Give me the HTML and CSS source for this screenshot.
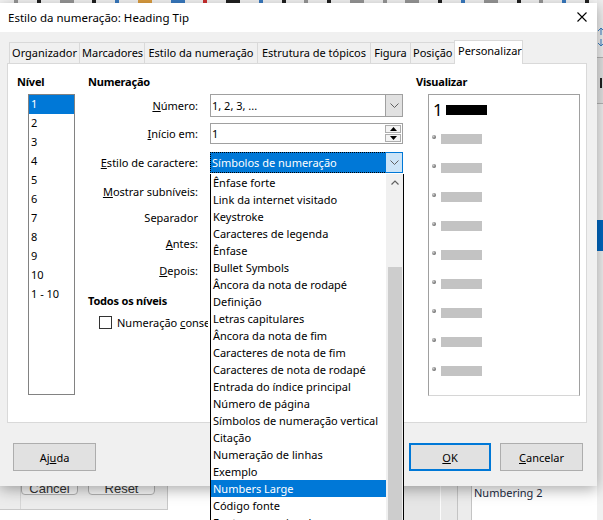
FILE: index.html
```html
<!DOCTYPE html>
<html lang="pt">
<head>
<meta charset="utf-8">
<title>Estilo da numeração: Heading Tip</title>
<link rel="stylesheet" href="styles.css">
</head>
<body>
<div class="screen">

  <div class="bg-toolbar">
    <i class="mk g"></i><i class="mk d"></i><i class="mk g wide"></i><i class="mk d"></i><i class="mk b"></i>
    <i class="mk o wide"></i><i class="mk b wide"></i><i class="mk r"></i><i class="mk d wide"></i><i class="mk b"></i>
    <i class="mk d"></i><i class="mk g"></i><i class="mk d"></i><i class="mk g wide"></i><i class="mk g"></i>
    <i class="mk g wide"></i><i class="mk d"></i><i class="mk b"></i><i class="mk g wide"></i><i class="mk d"></i>
    <i class="mk g"></i><i class="mk b"></i><i class="mk d"></i>
  </div>

  <div class="bg-side">
    <svg class="side-arrows" width="6" height="22" viewBox="0 0 6 22">
      <path d="M1 5 L4 2 L7 5 M4 2 V9 M1 17 L4 20 L7 17 M4 13 V20" fill="none" stroke="#3b7fc4" stroke-width="1"/>
    </svg>
    <div class="side-box"></div>
    <div class="side-blue"></div>
  </div>

  <div class="bg-bottom">
    <div class="bg-left">
      <div class="bg-btnbar">
        <span class="bg-btn cancel">Cancel</span>
        <span class="bg-btn reset">Reset</span>
      </div>
    </div>
    <div class="bg-white"></div>
    <div class="bg-col c1"></div>
    <div class="bg-col c2"></div>
    <div class="bg-col c3"></div>
    <div class="bg-col c4">Numbering 2</div>
  </div>

  <div class="dialog">
    <div class="titlebar">
      <span class="title">Estilo da numeração: Heading Tip</span>
      <svg class="close" width="10" height="10" viewBox="0 0 10 10">
        <path d="M0.5 0.5 L9.5 9.5 M9.5 0.5 L0.5 9.5" stroke="#000" stroke-width="1.1" fill="none"/>
      </svg>
    </div>

    <div class="tabs">
      <span class="tab t1">Organizador</span>
      <span class="tab t2">Marcadores</span>
      <span class="tab t3">Estilo da numeração</span>
      <span class="tab t4">Estrutura de tópicos</span>
      <span class="tab t5">Figura</span>
      <span class="tab t6">Posição</span>
      <span class="tab active">Personalizar</span>
    </div>

    <div class="panel">
      <div class="col-level">
        <div class="heading">Nível</div>
        <ul class="levels">
          <li class="sel">1</li>
          <li>2</li>
          <li>3</li>
          <li>4</li>
          <li>5</li>
          <li>6</li>
          <li>7</li>
          <li>8</li>
          <li>9</li>
          <li>10</li>
          <li>1 - 10</li>
        </ul>
      </div>

      <div class="col-num">
        <div class="heading">Numeração</div>

        <div class="frow r1">
          <span class="flabel"><u>N</u>úmero:</span>
          <div class="fctl combo">
            <span class="val">1, 2, 3, ...</span>
            <span class="dbtn"><svg width="9" height="5" viewBox="0 0 9 5"><path d="M0.5 0.5 L4.5 4.5 L8.5 0.5" fill="none" stroke="#606060"/></svg></span>
          </div>
        </div>

        <div class="frow r2">
          <span class="flabel"><u>I</u>nício em:</span>
          <div class="fctl spin">
            <span class="val">1</span>
            <span class="spinbtns">
              <span class="sb"><svg width="7" height="4" viewBox="0 0 7 4"><path d="M0 4 L3.5 0 L7 4 Z" fill="#000"/></svg></span>
              <span class="sb"><svg width="7" height="4" viewBox="0 0 7 4"><path d="M0 0 L3.5 4 L7 0 Z" fill="#000"/></svg></span>
            </span>
          </div>
        </div>

        <div class="frow r3">
          <span class="flabel"><u>E</u>stilo de caractere:</span>
          <div class="fctl combo focus">
            <span class="val">Símbolos de numeração</span>
            <span class="dbtn"><svg width="9" height="5" viewBox="0 0 9 5"><path d="M0.5 0.5 L4.5 4.5 L8.5 0.5" fill="none" stroke="#606060"/></svg></span>
          </div>
        </div>

        <div class="frow r4">
          <span class="flabel"><u>M</u>ostrar subníveis:</span>
        </div>

        <div class="frow r5">
          <span class="flabel">Separador</span>
        </div>

        <div class="frow r6">
          <span class="flabel"><u>A</u>ntes:</span>
        </div>

        <div class="frow r7">
          <span class="flabel"><u>D</u>epois:</span>
        </div>

        <div class="heading h2">Todos os níveis</div>

        <label class="check">
          <span class="box"></span>
          <span class="ctext">Numeração <u>c</u>onsecutiva</span>
        </label>
      </div>

      <div class="col-preview">
        <div class="heading">Visualizar</div>
        <div class="preview">
          <div class="prow first"><span class="num">1</span><span class="bar black"></span></div>
          <div class="prow"><span class="dot"></span><span class="bar"></span></div>
          <div class="prow"><span class="dot"></span><span class="bar"></span></div>
          <div class="prow"><span class="dot"></span><span class="bar"></span></div>
          <div class="prow"><span class="dot"></span><span class="bar"></span></div>
          <div class="prow"><span class="dot"></span><span class="bar"></span></div>
          <div class="prow"><span class="dot"></span><span class="bar"></span></div>
          <div class="prow"><span class="dot"></span><span class="bar"></span></div>
          <div class="prow"><span class="dot"></span><span class="bar"></span></div>
          <div class="prow"><span class="dot"></span><span class="bar"></span></div>
        </div>
      </div>
    </div>

    <div class="buttons">
      <span class="btn help">Aj<u>u</u>da</span>
      <span class="btn ok default"><u>O</u>K</span>
      <span class="btn cancel"><u>C</u>ancelar</span>
    </div>
  </div>

  <div class="dropdown">
    <ul class="options">
      <li>Ênfase forte</li>
      <li>Link da internet visitado</li>
      <li>Keystroke</li>
      <li>Caracteres de legenda</li>
      <li>Ênfase</li>
      <li>Bullet Symbols</li>
      <li>Âncora da nota de rodapé</li>
      <li>Definição</li>
      <li>Letras capitulares</li>
      <li>Âncora da nota de fim</li>
      <li>Caracteres de nota de fim</li>
      <li>Caracteres de nota de rodapé</li>
      <li>Entrada do índice principal</li>
      <li>Número de página</li>
      <li>Símbolos de numeração vertical</li>
      <li>Citação</li>
      <li>Numeração de linhas</li>
      <li>Exemplo</li>
      <li class="sel">Numbers Large</li>
      <li>Código fonte</li>
      <li>Fonte proporcional</li>
    </ul>
    <div class="scrollbar">
      <span class="sarrow"><svg width="8" height="5" viewBox="0 0 8 5"><path d="M0.5 4.5 L4 1 L7.5 4.5" fill="none" stroke="#606060" stroke-width="1.2"/></svg></span>
      <span class="thumb"></span>
    </div>
  </div>

</div>
</body>
</html>
```

FILE: styles.css
```css
* { box-sizing: border-box; margin: 0; padding: 0; }

html, body { width: 603px; height: 520px; overflow: hidden; }

body {
  font-family: "Noto Sans", "DejaVu Sans", sans-serif;
  font-size: 11px;
  color: #000;
  background: #f0f0f0;
}

u { text-decoration: underline; text-underline-offset: 1px; }

.screen {
  position: relative;
  width: 603px;
  height: 520px;
  overflow: hidden;
  background: #f0f0f0;
}

/* ---------- background application ---------- */
.bg-toolbar {
  position: absolute;
  left: 0; top: 0;
  width: 603px; height: 4px;
  background: #f7f7f7;
  display: flex;
  justify-content: space-between;
  padding: 0 14px;
}
.mk { display: block; width: 4px; height: 3px; }
.mk.wide { width: 14px; }
.mk.g { background: #9a9a9a; }
.mk.d { background: #222; }
.mk.b { background: #3a7cc4; }
.mk.o { background: #e0a040; }
.mk.r { background: #d03030; }

.bg-side {
  position: absolute;
  left: 597px; top: 0;
  width: 6px; height: 520px;
  background: #f0f0f0;
  display: flex;
  flex-direction: column;
}
.side-arrows { margin-top: 26px; }
.side-box {
  margin-top: 9px;
  height: 47px;
  border-top: 1px solid #b5b5b5;
  border-bottom: 1px solid #b5b5b5;
  background: #e3e3e3 linear-gradient(#222, #222) 3px 20px / 2px 10px no-repeat;
}
.side-blue {
  margin-top: 116px;
  height: 31px;
  background: #0067c0;
}

.bg-bottom {
  position: absolute;
  left: 0; top: 466px;
  width: 597px; height: 54px;
  display: flex;
  background: #fff;
}
.bg-left {
  width: 168px;
  height: 44px;
  background: #ececec;
  border-right: 1px solid #c8c8c8;
  border-bottom: 1px solid #c8c8c8;
  padding-left: 20px;
}
.bg-btnbar {
  height: 100%;
  border-left: 1px solid #d6d6d6;
  display: flex;
  align-items: flex-start;
  padding-top: 4px;
}
.bg-btn {
  display: block;
  height: 25px;
  padding-top: 10px;
  line-height: 15px;
  text-align: center;
  font-family: "Liberation Sans", Arial, sans-serif;
  font-size: 13px;
  color: #333;
  background: #f6f6f6;
  border: 1px solid #b0b0b0;
  border-radius: 0 0 4px 4px;
}
.bg-btn.cancel { width: 57px; }
.bg-btn.reset { width: 67px; margin-left: 10px; }
.bg-white { width: 42px; }
.bg-col { height: 100%; }
.bg-col.c1 {
  width: 231px;
  background: linear-gradient(to right, #fff 0, #fff 194px, #e6e6e6 194px, #e6e6e6 230px, #fbfbfb 230px);
}
.bg-col.c2 { width: 17px; background: #e8e8e8; border-right: 1px solid #c4c4c4; }
.bg-col.c3 { width: 14px; background: #ececec; border-right: 1px solid #c4c4c4; }
.bg-col.c4 {
  flex: 1;
  background: #fff;
  padding: 19px 0 0 2px;
  line-height: 15px;
  font-size: 11px;
  color: #1b2a3f;
}

/* ---------- dialog ---------- */
.dialog {
  position: absolute;
  left: 0; top: 3px;
  width: 597px; height: 483px;
  background: #f0f0f0;
  box-shadow: 0 3px 14px rgba(0, 0, 0, 0.35);
  display: flex;
  flex-direction: column;
}

.titlebar {
  height: 29px;
  background: #fff;
  display: flex;
  align-items: center;
  justify-content: space-between;
  padding: 0 10px 0 8px;
  font-size: 11.5px;
}
.close { display: block; margin-top: -2px; }

.tabs {
  display: flex;
  align-items: flex-end;
  height: 21px;
  margin: 10px 0 0 9px;
  position: relative;
  z-index: 1;
}
.tab {
  display: block;
  height: 21px;
  line-height: 20px;
  padding: 0 2px;
  border: 1px solid #d9d9d9;
  border-right: none;
  border-bottom: none;
  background: #f0f0f0;
  white-space: nowrap;
  text-align: center;
}
.tab.t1 { width: 70px; }
.tab.t2 { width: 65px; }
.tab.t3 { width: 113px; }
.tab.t4 { width: 113px; }
.tab.t5 { width: 40px; }
.tab.t6 { width: 44px; }
.tab.active {
  width: 69px;
  height: 24px;
  margin-bottom: -1px;
  line-height: 19px;
  background: #fff;
  border-right: 1px solid #d9d9d9;
  text-align: left;
  padding-left: 3px;
}

.panel {
  margin-left: 7px;
  width: 580px;
  height: 360px;
  background: #fff;
  border: 1px solid #d9d9d9;
  display: grid;
  grid-template-columns: 71px 328px 1fr;
  padding: 10px 0 0 9px;
}

.heading {
  font-weight: bold;
  font-size: 11px;
  line-height: 15px;
  height: 15px;
  letter-spacing: -0.2px;
}

/* level list */
.levels {
  list-style: none;
  margin: 5px 0 0 11px;
  width: 47px;
  height: 301px;
  border: 1px solid #828282;
  background: #fff;
}
.levels li {
  height: 19px;
  line-height: 18px;
  padding-left: 2px;
}
.levels li.sel { background: #0078d7; color: #fff; }

/* numbering form */
.frow { display: flex; align-items: center; }
.flabel { width: 110px; text-align: right; white-space: nowrap; }
.fctl { margin-left: 12px; width: 193px; height: 100%; }

.r1 { margin-top: 5px; height: 23px; }
.r2 { margin-top: 6px; height: 21px; }
.r3 { margin-top: 8px; height: 21px; }
.r4 { margin-top: 7px; height: 23px; }
.r5 { margin-top: 4px; height: 20px; }
.r6 { margin-top: 5px; height: 22px; }
.r7 { margin-top: 5px; height: 22px; }
.h2 { margin-top: 12px; }

.combo, .spin {
  display: flex;
  border: 1px solid #a0a0a0;
  background: #fff;
}
.val {
  flex: 1;
  padding-left: 1px;
  display: flex;
  align-items: center;
  white-space: nowrap;
  overflow: hidden;
}
.dbtn {
  width: 17px;
  background: #e1e1e1;
  border-left: 1px solid #a0a0a0;
  display: flex;
  align-items: center;
  justify-content: center;
}
.combo.focus { border: none; }
.combo.focus .val {
  background: #0078d7;
  color: #fff;
  border: 1px dotted #000;
  border-right: none;
}
.combo.focus .dbtn {
  width: 18px;
  background: #cce4f7;
  border: 1px solid #0078d7;
}

.spinbtns {
  width: 17px;
  display: flex;
  flex-direction: column;
  justify-content: center;
  gap: 1px;
  padding: 1px 1px 1px 0;
}
.sb {
  flex: 1;
  border: 1px solid #adadad;
  background: #f4f4f4;
  display: flex;
  align-items: center;
  justify-content: center;
}

.check {
  margin: 6px 0 0 11px;
  height: 16px;
  display: flex;
  align-items: center;
  white-space: nowrap;
}
.check .box {
  width: 13px; height: 13px;
  border: 1px solid #333;
  background: #fff;
  margin-right: 5px;
}
.check .ctext {
  width: 91px;
  overflow: hidden;
}

/* preview */
.col-preview { display: flex; flex-direction: column; }
.preview {
  margin: 5px 0 0 12px;
  width: 152px;
  height: 302px;
  background: #fff;
  border: 1px solid #a0a0a0;
  border-bottom-color: #d6d6d6;
  padding: 10px 0 0 3px;
}
.prow {
  display: flex;
  align-items: flex-start;
  height: 10px;
  margin-bottom: 19px;
}
.prow.first { align-items: center; }
.num {
  font-size: 17px;
  line-height: 10px;
  padding-left: 1px;
  margin-right: 3px;
}
.bar { width: 41px; height: 10px; background: #c3c3c3; }
.bar.black { background: #000; }
.dot {
  width: 4px; height: 4px;
  margin: 1px 5px 0 0;
  border-radius: 50%;
  background: radial-gradient(circle at 35% 35%, #d0d0d0 0, #7a7a7a 60%, #3c3c3c 100%);
}

/* buttons */
.buttons {
  display: flex;
  margin-top: 20px;
  padding: 0 14px 0 13px;
  gap: 9px;
}
.btn {
  display: flex;
  align-items: center;
  justify-content: center;
  height: 28px;
  background: #e1e1e1;
  border: 1px solid #adadad;
}
.btn.help { width: 83px; margin-right: auto; }
.btn.ok { width: 82px; border: 2px solid #0078d7; }
.btn.cancel { width: 83px; }

/* dropdown popup */
.dropdown {
  position: absolute;
  left: 210px; top: 174px;
  width: 194px; height: 346px;
  background: #fff;
  border-left: 1px solid #000;
  border-right: 1px solid #000;
  display: flex;
  overflow: hidden;
}
.options {
  list-style: none;
  width: 175px;
}
.options li {
  height: 17px;
  line-height: 17px;
  padding-left: 2px;
  white-space: nowrap;
  overflow: hidden;
}
.options li.sel { background: #0078d7; color: #fff; }
.scrollbar {
  width: 17px;
  background: #f0f0f0;
  display: flex;
  flex-direction: column;
  align-items: stretch;
}
.sarrow {
  height: 17px;
  display: flex;
  align-items: center;
  justify-content: center;
}
.thumb {
  margin: 76px 1px 0 2px;
  flex: 1;
  background: #cdcdcd;
}
```
